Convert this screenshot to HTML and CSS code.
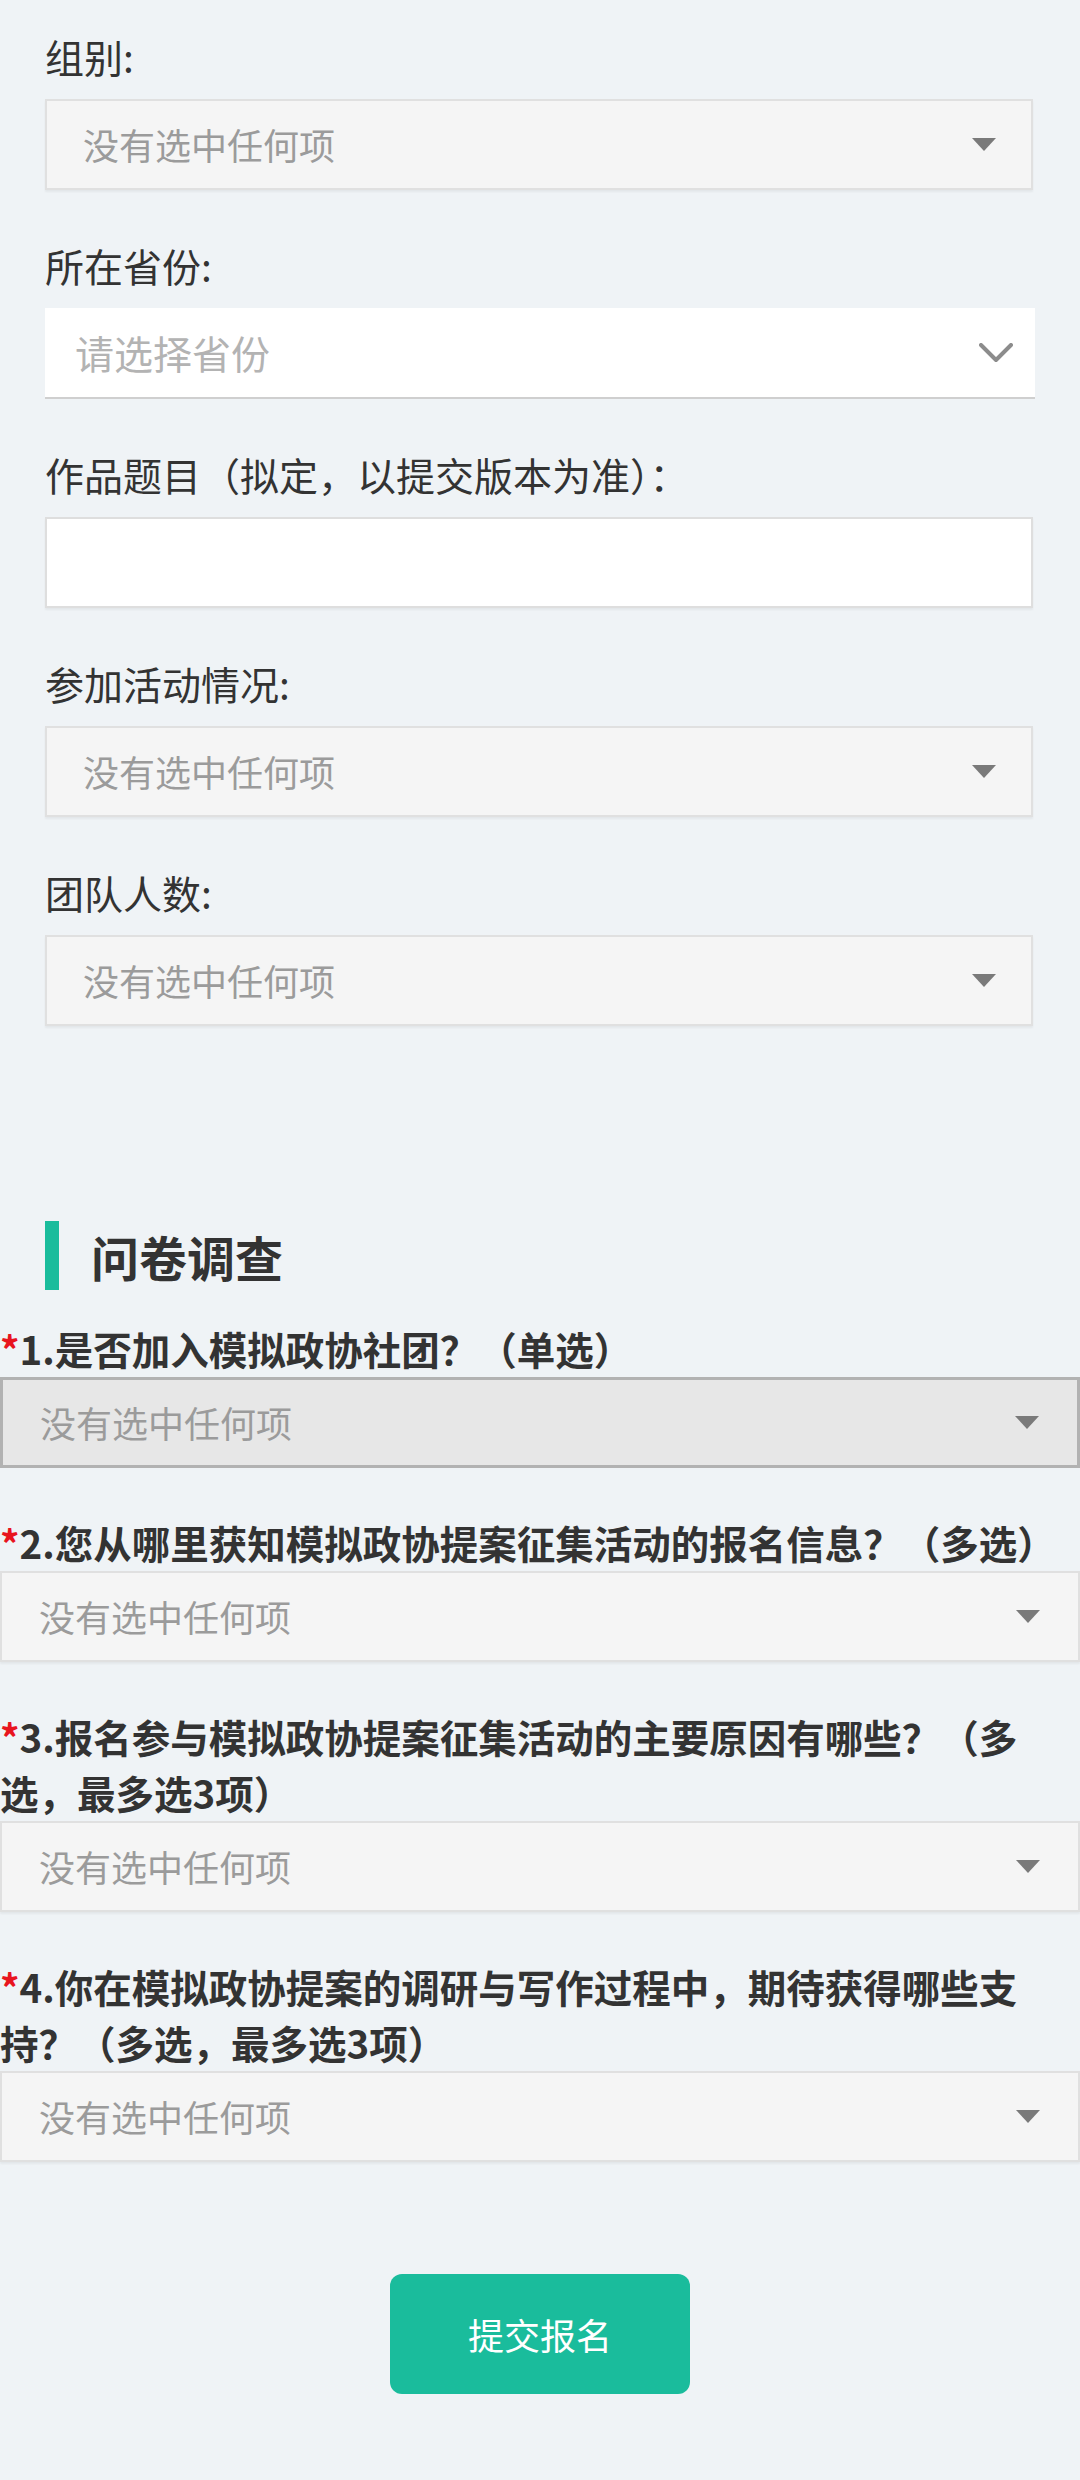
FILE: index.html
```html
<!DOCTYPE html>
<html lang="zh-CN">
<head>
<meta charset="utf-8">
<title>报名</title>
<link rel="stylesheet" href="styles.css">
</head>
<body>
<div class="page">
  <div class="form">
    <div class="field">
      <div class="label">组别:</div>
      <div class="select"><span class="ph">没有选中任何项</span><span class="caret"></span></div>
    </div>
    <div class="field">
      <div class="label">所在省份:</div>
      <div class="select select--white"><span class="ph ph--light">请选择省份</span>
        <svg class="chev" width="34" height="20" viewBox="0 0 34 20"><polyline points="2,2 17,17 32,2" fill="none" stroke="#8c8c8c" stroke-width="4" stroke-linecap="round" stroke-linejoin="round"/></svg>
      </div>
    </div>
    <div class="field">
      <div class="label">作品题目（拟定，以提交版本为准）：</div>
      <div class="input"></div>
    </div>
    <div class="field">
      <div class="label">参加活动情况:</div>
      <div class="select"><span class="ph">没有选中任何项</span><span class="caret"></span></div>
    </div>
    <div class="field">
      <div class="label">团队人数:</div>
      <div class="select"><span class="ph">没有选中任何项</span><span class="caret"></span></div>
    </div>
  </div>

  <h2 class="survey-title"><span class="bar"></span>问卷调查</h2>

  <div class="q-list">
    <div class="q">
      <div class="q-label"><span class="req">*</span>1.是否加入模拟政协社团？（单选）</div>
      <div class="select select--q select--active"><span class="ph">没有选中任何项</span><span class="caret"></span></div>
    </div>
    <div class="q">
      <div class="q-label"><span class="req">*</span>2.您从哪里获知模拟政协提案征集活动的报名信息？（多选）</div>
      <div class="select select--q"><span class="ph">没有选中任何项</span><span class="caret"></span></div>
    </div>
    <div class="q">
      <div class="q-label"><span class="req">*</span>3.报名参与模拟政协提案征集活动的主要原因有哪些？（多选，最多选3项）</div>
      <div class="select select--q"><span class="ph">没有选中任何项</span><span class="caret"></span></div>
    </div>
    <div class="q">
      <div class="q-label"><span class="req">*</span>4.你在模拟政协提案的调研与写作过程中，期待获得哪些支持？（多选，最多选3项）</div>
      <div class="select select--q"><span class="ph">没有选中任何项</span><span class="caret"></span></div>
    </div>
  </div>

  <div class="actions">
    <button class="submit" type="button">提交报名</button>
  </div>
</div>
</body>
</html>
```

FILE: styles.css
```css
html, body {
  margin: 0;
  padding: 0;
}
body {
  background: #eff3f6;
  font-family: "Noto Sans CJK SC", "Noto Sans", sans-serif;
  color: #333;
  width: 1080px;
}
.page {
  padding-bottom: 80px;
}
.form {
  padding: 28px 47px 0 45px;
}
.field {
  margin-bottom: 47px;
}
.field:last-child {
  margin-bottom: 0;
}
.label {
  font-size: 39px;
  line-height: 57px;
  margin-bottom: 14px;
  color: #333;
}
.select {
  box-sizing: border-box;
  height: 91px;
  display: flex;
  align-items: center;
  justify-content: space-between;
  background: #f5f5f5;
  border: 2px solid #e0e0e0;
  box-shadow: 0 2px 2px rgba(0, 0, 0, 0.05);
  padding: 0 35px 0 36px;
}
.ph {
  font-size: 36px;
  line-height: 53px;
  color: #9b9b9b;
}
.ph--light {
  font-size: 39px;
  line-height: 57px;
  color: #b3b3b3;
}
.caret {
  width: 0;
  height: 0;
  border-left: 12px solid transparent;
  border-right: 12px solid transparent;
  border-top: 13px solid #7a7a7a;
}
.select--white {
  background: #fff;
  border: none;
  border-bottom: 2px solid #cfcfcf;
  box-shadow: none;
  padding: 0 22px 0 30px;
  margin-right: -2px;
}
.chev {
  display: block;
}
.input {
  box-sizing: border-box;
  height: 91px;
  background: #fff;
  border: 2px solid #dedede;
  box-shadow: 0 2px 2px rgba(0, 0, 0, 0.05);
}
.survey-title {
  margin: 195px 0 0 45px;
  height: 69px;
  display: flex;
  align-items: center;
  font-size: 48px;
  font-weight: 700;
  color: #333;
}
.bar {
  width: 14px;
  height: 69px;
  background: #1abc9c;
  margin-right: 32px;
}
.q-list {
  margin-top: 30px;
}
.q {
  margin-bottom: 46px;
}
.q:last-child {
  margin-bottom: 0;
}
.q-label {
  font-size: 38.5px;
  font-weight: 700;
  line-height: 56px;
  margin-bottom: 1px;
  color: #333;
}
.req {
  color: #e8141e;
  font-weight: 700;
}
.select--q {
  padding: 0 38px 0 37px;
}
.select--active {
  background: #e7e7e7;
  border: 3px solid #b2b2b2;
  box-shadow: none;
}
.actions {
  display: flex;
  justify-content: center;
  margin-top: 112px;
}
.submit {
  width: 300px;
  height: 120px;
  border: none;
  border-radius: 12px;
  background: #1abc9c;
  color: #fff;
  font-family: "Noto Sans CJK SC", "Noto Sans", sans-serif;
  font-size: 36px;
  padding: 0;
}
```
